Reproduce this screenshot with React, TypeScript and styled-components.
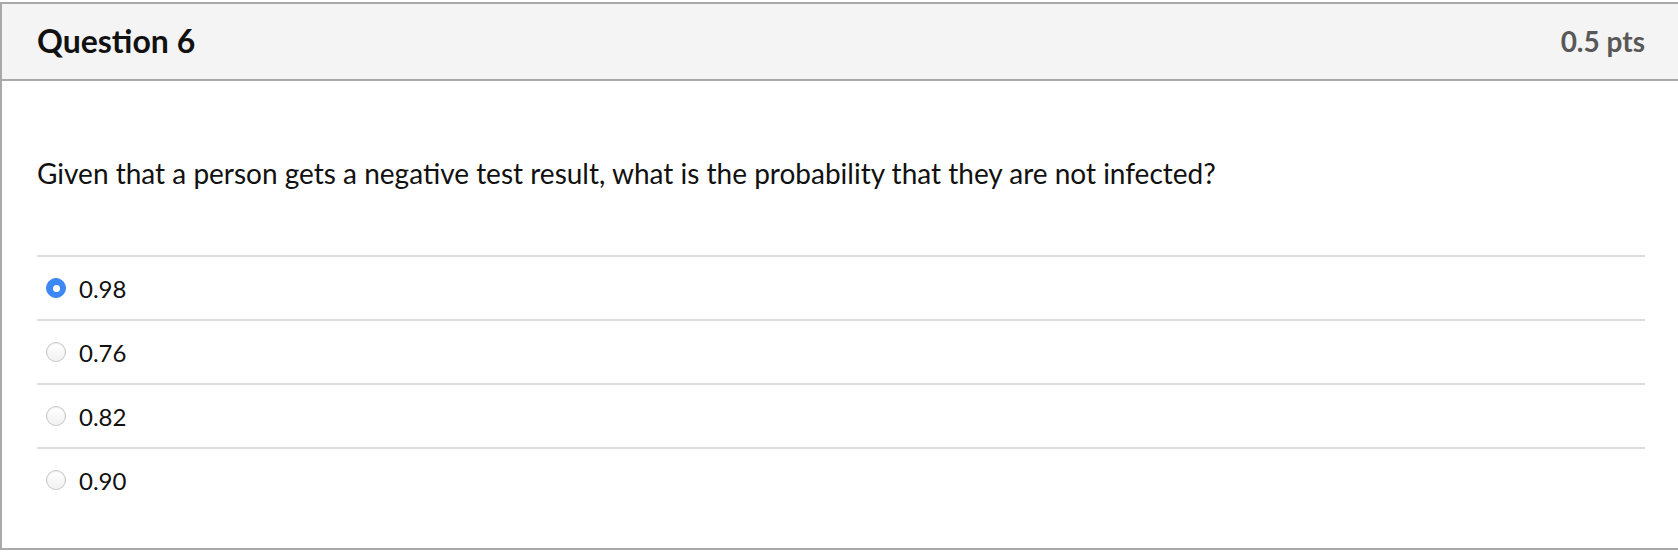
import styled, { createGlobalStyle } from "styled-components";

const GlobalStyle = createGlobalStyle`
  html, body {
    margin: 0;
    padding: 0;
    background: #ffffff;
    overflow: hidden;
  }
  body {
    font-family: Lato, "Open Sans", "Liberation Sans", sans-serif;
    color: #111;
  }
`;

const Page = styled.div`
  padding-top: 2px;
  width: 1690px;
`;

const QuestionBox = styled.div`
  border: 2px solid #a9a9a9;
  background: #fff;
  height: 548px;
  box-sizing: border-box;
`;

const Header = styled.div`
  display: flex;
  align-items: center;
  justify-content: space-between;
  height: 75px;
  padding: 0 43px 0 35px;
  background: #f4f4f4;
  border-bottom: 2px solid #a9a9a9;
`;

const Title = styled.h2`
  margin: 0;
  font-size: 32px;
  font-weight: 700;
  color: #111;
  padding-bottom: 2px;
`;

const Points = styled.span`
  font-size: 28px;
  font-weight: 700;
  color: #585858;
  padding-bottom: 2px;
`;

const Body = styled.div`
  padding: 72px 43px 0 35px;
`;

const Prompt = styled.p`
  margin: 0 0 62px;
  font-size: 28px;
  line-height: 40px;
  color: #111;
`;

const Answers = styled.div`
  display: flex;
  flex-direction: column;
`;

const Answer = styled.label`
  display: flex;
  align-items: center;
  gap: 13px;
  height: 62px;
  padding-left: 9px;
  border-top: 2px solid #dcdcdc;
  font-size: 24px;
  color: #111;
`;

const Radio = styled.span<{ $checked?: boolean }>`
  box-sizing: border-box;
  width: 20px;
  height: 20px;
  border-radius: 50%;
  flex-shrink: 0;
  display: flex;
  align-items: center;
  justify-content: center;
  ${(p) =>
    p.$checked
      ? `background: #3c89f5; border: 1px solid #3a84ee;`
      : `background: linear-gradient(#ffffff, #f1f1f1); border: 1px solid #c6c6c6; box-shadow: inset 0 1px 1px rgba(0,0,0,0.06);`}

  &::after {
    content: "";
    display: ${(p) => (p.$checked ? "block" : "none")};
    width: 7px;
    height: 7px;
    border-radius: 50%;
    background: #fff;
  }
`;

const options = [
  { value: "0.98", checked: true },
  { value: "0.76", checked: false },
  { value: "0.82", checked: false },
  { value: "0.90", checked: false },
];

export default function App() {
  return (
    <>
      <GlobalStyle />
      <Page>
        <QuestionBox>
          <Header>
            <Title>Question 6</Title>
            <Points>0.5 pts</Points>
          </Header>
          <Body>
            <Prompt>
              Given that a person gets a negative test result, what is the
              probability that they are not infected?
            </Prompt>
            <Answers>
              {options.map((o) => (
                <Answer key={o.value}>
                  <Radio $checked={o.checked} />
                  {o.value}
                </Answer>
              ))}
            </Answers>
          </Body>
        </QuestionBox>
      </Page>
    </>
  );
}
